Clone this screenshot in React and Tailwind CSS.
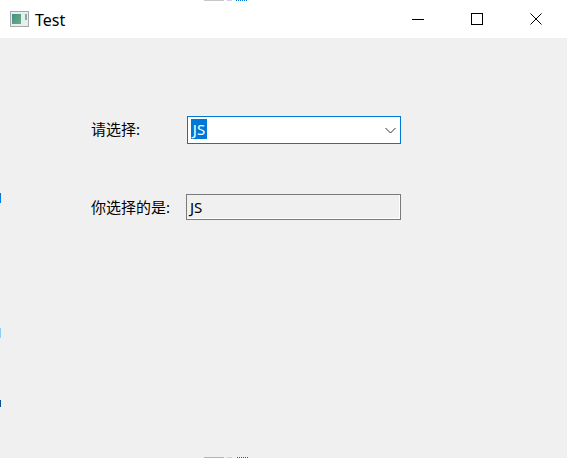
function Artifact({ className }) {
  return <div className={`absolute ${className}`} />;
}

export default function App() {
  return (
    <div className="relative w-[567px] h-[458px] overflow-hidden bg-[#f0f0f0] text-black font-['Noto_Sans','Noto_Sans_CJK_SC',sans-serif]">
      {/* Title bar */}
      <div className="flex items-center h-[38px] bg-white">
        <svg className="ml-[10px]" width="19" height="16" viewBox="0 0 19 16">
          <defs>
            <linearGradient id="pane" x1="0" y1="0" x2="1" y2="1">
              <stop offset="0" stopColor="#3f8f8f" />
              <stop offset="1" stopColor="#6fae78" />
            </linearGradient>
          </defs>
          <rect x="0.5" y="0.5" width="18" height="15" fill="#e8eef0" stroke="#a8a8a8" />
          <rect x="2" y="3" width="9" height="10" fill="url(#pane)" />
          <rect x="15" y="3" width="2" height="6" fill="#7fb0a8" />
        </svg>
        <span className="ml-[6px] pt-[2px] text-[16px] leading-none">Test</span>
        <div className="ml-auto flex items-center h-full">
          <div className="flex justify-center items-center w-[59px] h-full">
            <svg width="14" height="14" viewBox="0 0 14 14">
              <path d="M1 7.5H13" stroke="#000" fill="none" />
            </svg>
          </div>
          <div className="flex justify-center items-center w-[59px] h-full">
            <svg width="14" height="14" viewBox="0 0 14 14">
              <rect x="1.5" y="1.5" width="11" height="11" stroke="#000" fill="none" />
            </svg>
          </div>
          <div className="flex justify-center items-center w-[59px] h-full mr-[2px]">
            <svg width="14" height="14" viewBox="0 0 14 14">
              <path d="M1.5 1.5L12.5 12.5M12.5 1.5L1.5 12.5" stroke="#000" fill="none" />
            </svg>
          </div>
        </div>
      </div>

      {/* Form */}
      <div className="flex flex-col pt-[78px] pl-[91px] text-[15px]">
        <div className="flex items-center h-[28px]">
          <span className="w-[96px] pb-[2px]">请选择:</span>
          <div className="flex items-center w-[214px] h-[28px] bg-white border border-[#0078d7] pl-[3px] pr-[4px]">
            <span className="flex justify-center items-center w-[16px] h-[20px] mb-[2px] bg-[#0078d7] text-white">JS</span>
            <svg className="ml-auto" width="11" height="7" viewBox="0 0 11 7">
              <path d="M0.5 1L5.5 6L10.5 1" stroke="#333" fill="none" />
            </svg>
          </div>
        </div>
        <div className="flex items-center h-[26px] mt-[50px]">
          <span className="w-[95px]">你选择的是:</span>
          <div className="flex items-center w-[215px] h-[26px] border border-[#7a7a7a] pl-[3px] shadow-[inset_-1px_-1px_0_#ffffff]">
            JS
          </div>
        </div>
      </div>

      {/* Stray pixels along the edges of the capture */}
      <Artifact className="left-[204px] top-0 w-[20px] h-px bg-[#c8c8c8]" />
      <Artifact className="left-[227px] top-0 w-[5px] h-px bg-[#c8d0e8]" />
      <Artifact className="left-[236px] top-0 w-[11px] h-px bg-[repeating-linear-gradient(90deg,#0078d7_0_1px,#ffffff_1px_2px)]" />
      <Artifact className="left-0 top-[193px] w-px h-[10px] bg-[#0078d7]" />
      <Artifact className="left-0 top-[328px] w-px h-[10px] bg-[#8ad0f0]" />
      <Artifact className="left-0 top-[400px] w-px h-[7px] bg-[#0a4f8f]" />
      <Artifact className="left-[204px] bottom-0 w-[20px] h-px bg-[#b4b4b4]" />
      <Artifact className="left-[227px] bottom-0 w-[5px] h-px bg-[#c8d0e0]" />
      <Artifact className="left-[237px] bottom-0 w-[11px] h-px bg-[repeating-linear-gradient(90deg,#1f5f9f_0_1px,#f0f0f0_1px_2px)]" />
    </div>
  );
}
